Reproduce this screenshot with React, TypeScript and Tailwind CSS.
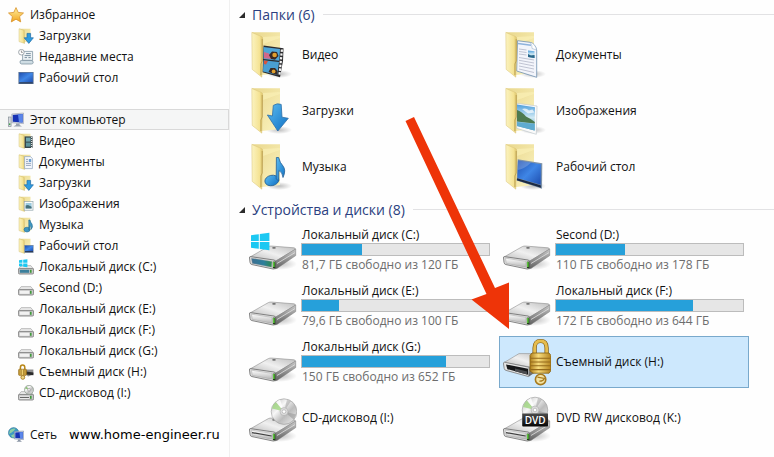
import { ReactNode } from 'react'

type Badge = 'video' | 'documents' | 'downloads' | 'pictures' | 'music' | 'desktop'
type DriveKind = 'system' | 'plain' | 'cd' | 'dvd' | 'locked'

type TreeEntry = { label: string; icon: ReactNode }
type Folder = { label: string; badge: Badge }
type Drive = { label: string; kind: DriveKind; used?: number; info?: string }

// gradients shared by all the icons on the page
function IconDefs() {
  return (
    <svg className="absolute size-0" aria-hidden="true">
      <defs>
        <linearGradient id="folderFront" x1="0" y1="0" x2="1" y2="0">
          <stop offset="0" stopColor="#fbf3c0" />
          <stop offset="0.7" stopColor="#f5e394" />
          <stop offset="1" stopColor="#dcc36a" />
        </linearGradient>
        <linearGradient id="folderBack" x1="0" y1="0" x2="1" y2="1">
          <stop offset="0" stopColor="#e9d78c" />
          <stop offset="1" stopColor="#fbf3c0" />
        </linearGradient>
        <linearGradient id="blue" x1="0" y1="0" x2="1" y2="1">
          <stop offset="0" stopColor="#5cbcf0" />
          <stop offset="1" stopColor="#0f70c4" />
        </linearGradient>
        <linearGradient id="screen" x1="0" y1="0" x2="1" y2="1">
          <stop offset="0" stopColor="#1f4fb0" />
          <stop offset="0.5" stopColor="#3f86e6" />
          <stop offset="1" stopColor="#1d4cae" />
        </linearGradient>
        <linearGradient id="photo" x1="0" y1="0" x2="0" y2="1">
          <stop offset="0" stopColor="#4f9fdc" />
          <stop offset="0.5" stopColor="#cfe9f4" />
          <stop offset="1" stopColor="#3f8fb4" />
        </linearGradient>
        <linearGradient id="driveTop" x1="0" y1="1" x2="1" y2="0">
          <stop offset="0" stopColor="#b9b9b9" />
          <stop offset="0.5" stopColor="#f0f0f0" />
          <stop offset="1" stopColor="#bdbdbd" />
        </linearGradient>
        <linearGradient id="driveFront" x1="0" y1="0" x2="0" y2="1">
          <stop offset="0" stopColor="#ffffff" />
          <stop offset="1" stopColor="#b4b4b4" />
        </linearGradient>
        <linearGradient id="driveSide" x1="0" y1="0" x2="0" y2="1">
          <stop offset="0" stopColor="#c9c9c9" />
          <stop offset="1" stopColor="#5e5e5e" />
        </linearGradient>
        <linearGradient id="driveSystem" x1="0" y1="0" x2="1" y2="0">
          <stop offset="0" stopColor="#3c6f91" />
          <stop offset="0.6" stopColor="#2d7f9c" />
          <stop offset="1" stopColor="#2f8a4c" />
        </linearGradient>
        <linearGradient id="disc" x1="0" y1="0" x2="1" y2="1">
          <stop offset="0" stopColor="#b5b5b5" />
          <stop offset="0.35" stopColor="#f7f7f7" />
          <stop offset="0.6" stopColor="#bcbcbc" />
          <stop offset="1" stopColor="#f0f0f0" />
        </linearGradient>
        <linearGradient id="label" x1="0" y1="0" x2="0" y2="1">
          <stop offset="0" stopColor="#4a4a4a" />
          <stop offset="1" stopColor="#050505" />
        </linearGradient>
        <linearGradient id="gold" x1="0" y1="0" x2="1" y2="0">
          <stop offset="0" stopColor="#b07f1c" />
          <stop offset="0.4" stopColor="#f7dc7c" />
          <stop offset="1" stopColor="#b5841f" />
        </linearGradient>
        <linearGradient id="star" x1="0" y1="0" x2="0" y2="1">
          <stop offset="0" stopColor="#fff0a0" />
          <stop offset="1" stopColor="#f2a51e" />
        </linearGradient>
        <radialGradient id="shadow">
          <stop offset="0" stopColor="#000000" stopOpacity="0.25" />
          <stop offset="1" stopColor="#000000" stopOpacity="0" />
        </radialGradient>
      </defs>
    </svg>
  )
}

function FolderBadge({ badge }: { badge: Badge }) {
  switch (badge) {
    case 'video':
      return (
        <g>
          <path d="M14.5 14.5 34.5 17.3 34 30 31 46.3 13.5 41.3Z" fill="#2b2b2e" />
          <path d="M14.5 16 31 18 30.3 29.8 14.5 28Z" fill="#4fa6d8" />
          <path d="M14.5 29.2 30 31 28.3 44 14 40.4Z" fill="#4a9fd2" />
          <path d="M15 21 20 22.5 23 28 15 27.2Z" fill="#d2688a" />
          <path d="M20 24 23 20.5 28 21 29.5 25 26 28.8 22 28Z" fill="#3a2a24" />
          <circle cx="25.6" cy="24" r="2.3" fill="#e0a02e" />
          <path d="M15 29.6 19 30 17 33.5 15 33Z" fill="#d9543c" />
          <path d="M19.5 41 21.5 37 26 37 28.6 40 28.3 44Z" fill="#3a2a24" />
          <circle cx="24.6" cy="40.4" r="1.9" fill="#e0a02e" />
          <path d="M32.9 18.5 30.4 45" stroke="#f4f4f4" strokeWidth="2.2" strokeDasharray="2.4 1.4" fill="none" />
        </g>
      )
    case 'documents':
      return (
        <g>
          <path d="M14.5 9.7 27 11.3Q32 12.4 33.7 19V46.3L13.7 40Z" fill="#f3f5fb" stroke="#6f8fb0" strokeWidth="0.8" />
          <path d="M15 12.5 28 14.2" stroke="#8fb3dc" strokeWidth="1.6" />
          <path d="M16 18 23.5 19M16 20.5 23.5 21.5M16 23 23.5 24M16 26.5 31 29M16 29.3 31 32M16 32 31 35M16 35 31 38M16 38 31 41.5" stroke="#a9adc0" strokeWidth="0.7" />
          <path d="M25 19.5 31.5 20.3V27L25 26Z" fill="url(#photo)" />
          <path d="M25 23 28 24.5 31.5 24V27L25 26Z" fill="#2b6688" />
          <path d="M27 11.3Q29.5 14 29 17.5L33.7 19Q32 12.4 27 11.3Z" fill="#ffffff" stroke="#8aa6c4" strokeWidth="0.5" />
        </g>
      )
    case 'downloads':
      return (
        <path
          d="M24.3 18.4Q28 15.8 32.2 17.4L33 30.2 39.3 31.3 28.8 44 18.4 28 23.4 29Z"
          fill="url(#blue)"
          stroke="#2c6ea8"
          strokeWidth="0.8"
          strokeLinejoin="round"
        />
      )
    case 'pictures':
      return (
        <g>
          <path d="M13.7 16.3 34 19 33.3 47.3 13.7 41.3Z" fill="#fafafa" stroke="#b9c2c8" strokeWidth="0.6" />
          <path d="M14 17.6 32 20.2 31.6 43.5 14 39Z" fill="url(#photo)" />
          <path d="M19 22Q23 20.4 26 23.4L29.4 22.4 31.4 25.4 25 26.6Z" fill="#ffffff" opacity="0.7" />
          <path d="M14 23Q19 24.6 23 29.6 27 31.4 31.8 35V36.6L14 34.5Z" fill="#4d7a50" />
          <path d="M14 35 31.8 37 31.6 43.5 14 39Z" fill="#5fabd0" />
        </g>
      )
    case 'music':
      return (
        <g fill="url(#blue)" stroke="#235f96" strokeWidth="0.8" strokeLinejoin="round">
          <ellipse cx="22.8" cy="37.5" rx="7" ry="5.2" transform="rotate(-12 22.8 37.5)" />
          <path d="M27.4 14.5 29.6 14.5Q31 20 34 23 37.4 27 34 34.5 33.6 29 29.8 27.5V38L27.2 36Z" />
        </g>
      )
    case 'desktop':
      return (
        <g>
          <path d="M14.7 16.3 39.3 20.3 39 45.7 13.7 37.5Z" fill="#7e93aa" />
          <path d="M15 17.6 37.9 21.3 37.7 41.8 14.5 35Z" fill="url(#screen)" />
          <path d="M15 17.6 28 19.7Q21 26 14.8 27Z" fill="#ffffff" opacity="0.2" />
          <path d="M14.2 35.2 37.7 42.2 38 44.8 13.7 37.2Z" fill="#1c2a44" />
        </g>
      )
  }
}

function FolderIcon({ badge }: { badge: Badge }) {
  return (
    <svg viewBox="0 0 48 48" className="size-12 shrink-0" aria-hidden="true">
      <ellipse cx="30" cy="43" rx="13" ry="4" fill="url(#shadow)" />
      <path d="M3 1.3H31V42L13 44Z" fill="url(#folderBack)" />
      <path d="M13.5 6 31 5V7L14 13Z" fill="#f9efb5" opacity="0.7" />
      <FolderBadge badge={badge} />
      <path
        d="M2.8 1.4 12.6 5.6Q13.8 6.2 13.7 8L12.8 46.2 3.2 38.4Z"
        fill="url(#folderFront)"
        stroke="#d8c277"
        strokeWidth="0.5"
      />
      <path d="M13.2 8V30L11.9 33V44" stroke="#b3974a" strokeWidth="0.8" fill="none" />
    </svg>
  )
}

function DriveBody({ kind }: { kind: DriveKind }) {
  const front = kind === 'system' ? 'url(#driveSystem)' : 'url(#driveFront)'
  return (
    <g strokeLinejoin="round">
      <ellipse cx="30" cy="38" rx="18" ry="6" fill="url(#shadow)" />
      <path d="M1 31 19.5 20.5Q20.8 19.9 23 20.1L45 21.8Q47 22.2 46 23.6L27 35Z" fill="url(#driveTop)" stroke="#8e8e8e" strokeWidth="0.6" />
      <path d="M26.8 35 46.7 23V29.6L28 42.4 25.4 43Z" fill="url(#driveSide)" stroke="#7a7a7a" strokeWidth="0.5" />
      <path d="M28 37.5 46 26.6" stroke="#e2e2e2" strokeWidth="0.8" />
      <path d="M1.4 30.6 25 34Q27 34.4 26.7 36.5L26 42Q25.6 43.4 24 43L3 38.6Q1.2 38.2 1 36.4L0.5 32Q0.3 30.6 1.4 30.6Z" fill="#dedede" stroke="#6c6c6c" strokeWidth="0.8" />
      <path d="M2.4 32.2 23 35.4 22.6 41.2 3.3 37.4Z" fill={front} stroke="#9a9a9a" strokeWidth="0.4" />
      {(kind === 'cd' || kind === 'dvd') && <path d="M3 34.6 22.6 38" stroke="#3d3d3d" strokeWidth="1.2" />}
      <rect x="23.8" y="35.6" width="2.6" height="6.6" fill="#233d1c" />
      <rect x="24" y="36" width="1.6" height="5" fill="#5ac23a" />
      <ellipse cx="25" cy="21.9" rx="1.9" ry="0.8" fill="#6d6d6d" />
    </g>
  )
}

function Disc({ cx, cy }: { cx: number; cy: number }) {
  return (
    <g transform={`translate(${cx} ${cy})`}>
      <circle r="12.8" fill="url(#disc)" stroke="#9b9b9b" strokeWidth="0.6" />
      <path d="M0 0-12-3Q-11-7.5-8-9.6Z" fill="#9fd67f" opacity="0.8" />
      <path d="M0 0-8-9.6-4-12Z" fill="#ffffff" opacity="0.8" />
      <path d="M0 0 12 3 9.6 8Z" fill="#8f8f8f" opacity="0.5" />
      <path d="M0 0 3-12.2 7-10.5Z" fill="#8d8d8d" opacity="0.4" />
      <circle r="4" fill="#dcdcdc" stroke="#a5a5a5" strokeWidth="0.5" />
      <circle r="1.8" fill="#ffffff" stroke="#999999" strokeWidth="0.5" />
    </g>
  )
}

function DriveIcon({ kind }: { kind: DriveKind }) {
  if (kind === 'locked') {
    return (
      <svg viewBox="0 0 48 48" className="size-12 shrink-0" aria-hidden="true">
        <path d="M1 24.6 16 15.6H40L27 29Z" fill="url(#driveTop)" stroke="#8e8e8e" strokeWidth="0.6" />
        <path d="M26 29 40 20V29L26 38.6Z" fill="url(#driveSide)" />
        <path d="M1.4 24.2 26 29.2 25.6 38.6 3 32.4Q1.4 32 1.2 30.4L0.5 26Q0.3 24.2 1.4 24.2Z" fill="#e4e4e4" stroke="#777777" strokeWidth="0.8" />
        <path d="M3 26.4 25 30.8V36.8L4.4 31.2Z" fill="#17181a" />
        <path d="M12 30.6 24 33.4V36.4L12 33.2Z" fill="#4b4d50" />
        <path d="M31.6 17V10Q31.6 3 37.6 3T43.6 10V17" fill="none" stroke="#7d5810" strokeWidth="4.2" />
        <path d="M31.6 17V10Q31.6 3 37.6 3T43.6 10V17" fill="none" stroke="#e6bd4e" strokeWidth="2.8" />
        <path d="M27 17.4 29 15H46L48 17.4V32.6L46 35.2H30L27 33Z" fill="url(#gold)" stroke="#83600f" strokeWidth="0.8" />
        <path d="M27.4 20.3H47.6M27.4 24H47.6M27.4 27.8H47.6M27.4 31.6H47.6" stroke="#94691a" strokeWidth="1.1" />
        <circle cx="37.6" cy="41.4" r="5.2" fill="#f3e3a4" stroke="#a77a1c" strokeWidth="1.6" />
        <path d="M34.4 39.2 41.4 40.4Q40 43.4 36.4 43.2" fill="none" stroke="#a77a1c" strokeWidth="1.2" />
      </svg>
    )
  }

  const lowered = kind === 'cd' || kind === 'dvd'
  return (
    <svg viewBox="0 0 48 48" className="size-12 shrink-0" aria-hidden="true">
      <g transform={lowered ? 'translate(0 4)' : undefined}>
        <DriveBody kind={kind} />
      </g>
      {kind === 'system' && (
        <path
          d="M2 9.2 9.8 8.2V15H2ZM10.8 8 20.4 6.7V15H10.8ZM2 16H9.8V22.8L2 21.8ZM10.8 16H20.4V24.2L10.8 23Z"
          fill="#1cc8f2"
        />
      )}
      {kind === 'cd' && <Disc cx={35} cy={17.6} />}
      {kind === 'dvd' && (
        <g>
          <Disc cx={32} cy={16} />
          <path d="M19.2 19.6H45V31.4Q45 32.4 44 32.4H20.2Q19.2 32.4 19.2 31.4Z" fill="url(#label)" />
          <text x="32.1" y="29.6" textAnchor="middle" className="fill-white font-['Open_Sans',sans-serif] text-[10px] font-semibold">
            DVD
          </text>
        </g>
      )}
    </svg>
  )
}

function SmallIcon({ children }: { children: ReactNode }) {
  return (
    <svg viewBox="0 0 16 16" className="size-4 shrink-0" aria-hidden="true">
      {children}
    </svg>
  )
}

function SmallFolder({ badge }: { badge: Badge }) {
  return (
    <SmallIcon>
      <path d="M1 0.8H12.5V14H6Z" fill="url(#folderBack)" />
      <path d="M1 0.8 6.2 2.4 6.6 15.4 1 13.6Z" fill="url(#folderFront)" stroke="#cdb562" strokeWidth="0.4" />
      {badge === 'video' && (
        <g>
          <rect x="6.6" y="3.4" width="8" height="11.6" fill="#38464a" />
          <rect x="8" y="4.6" width="4.6" height="4" fill="#6fa6ae" />
          <rect x="8" y="9.6" width="4.6" height="4" fill="#5d949c" />
          <path d="M13.7 4V15" stroke="#ffffff" strokeDasharray="1 1" />
        </g>
      )}
      {badge === 'documents' && (
        <g>
          <path d="M6.6 2.6H12.6L14.4 4.6V14.6H6.6Z" fill="#f4f7fc" stroke="#8ea2bd" strokeWidth="0.7" />
          <path d="M8 5.4H10M8 7.4H10M8 9.4H13M8 11.4H13" stroke="#8093ae" strokeWidth="0.8" />
          <rect x="10.8" y="5" width="2.4" height="3" fill="#6da0d2" />
        </g>
      )}
      {badge === 'downloads' && (
        <path d="M9 5.4H12.6V9.8H15.4L10.8 15.4 6.2 9.8H9Z" fill="#2f9be0" stroke="#1e6ca8" strokeWidth="0.7" />
      )}
      {badge === 'pictures' && (
        <g>
          <rect x="6.2" y="5.6" width="8.8" height="8.6" fill="#fafcfc" stroke="#93a5ac" strokeWidth="0.7" />
          <rect x="7.6" y="7" width="6" height="5.6" fill="#9ccbe0" />
          <path d="M7.6 9.4 10 9 13.6 10.8V12.6H7.6Z" fill="#44707c" />
        </g>
      )}
      {badge === 'music' && (
        <g fill="#3d97c4" stroke="#24698f" strokeWidth="0.6">
          <ellipse cx="9" cy="12.6" rx="3" ry="2.4" />
          <path d="M10.8 3H12Q12.4 5.4 14 7 15.4 9.6 13.2 12.4 13.6 9.4 12 8.6V13H10.8Z" />
        </g>
      )}
      {badge === 'desktop' && (
        <g>
          <rect x="6.2" y="7" width="9.4" height="7.8" fill="#7c8da3" />
          <rect x="7" y="7.8" width="8" height="5.4" fill="url(#screen)" />
          <rect x="7" y="13.2" width="8" height="1" fill="#1d2b48" />
        </g>
      )}
    </SmallIcon>
  )
}

function SmallDrive({ kind }: { kind: DriveKind }) {
  return (
    <SmallIcon>
      {kind === 'locked' ? (
        <g>
          <path d="M6 8 9 5.4H15.4V10.6L10 12.6Z" fill="#8e8e8e" />
          <path d="M8 7.6 15.4 8.6V11.2L8 10.6Z" fill="#2b2b2b" />
          <path d="M2.4 6V3.4Q2.4 1 4.6 1T6.8 3.4V6" fill="none" stroke="#b98718" strokeWidth="1.5" />
          <rect x="0.6" y="5.2" width="8" height="6.2" rx="0.8" fill="url(#gold)" stroke="#94691a" strokeWidth="0.6" />
          <path d="M3.2 5.4V11.2M5.8 5.4V11.2" stroke="#94691a" strokeWidth="0.8" />
          <circle cx="4.8" cy="13.4" r="1.9" fill="#f0d88a" stroke="#a77a1c" strokeWidth="0.9" />
        </g>
      ) : (
        <g>
          <path d="M3.2 6.6H12.8L15.6 10H0.4Z" fill="#e6e6e6" stroke="#9d9d9d" strokeWidth="0.6" />
          <rect x="0.4" y="9.6" width="15.2" height="5.4" rx="1.2" fill="#c9c9c9" stroke="#777777" strokeWidth="0.8" />
          <rect
            x="1.8"
            y="10.8"
            width="9.4"
            height="3"
            className={kind === 'system' ? 'fill-[#3b7f9c]' : 'fill-[#f2f2f2]'}
          />
          <rect x="12" y="10.8" width="1.6" height="3" fill="#3f9a3a" />
        </g>
      )}
      {kind === 'system' && (
        <path d="M1 1.2 4.4 0.8V3.8H1ZM5.2 0.7 9.4 0.2V3.8H5.2ZM1 4.6H4.4V7.6L1 7.2ZM5.2 4.6H9.4V8.2L5.2 7.7Z" fill="#1cc8f2" />
      )}
      {kind === 'cd' && (
        <g>
          <circle cx="11" cy="4.8" r="4.5" fill="url(#disc)" stroke="#8b9a8b" strokeWidth="0.7" />
          <path d="M11 4.8 7 3.4 8.6 1.4Z" fill="#8fc47a" />
          <circle cx="11" cy="4.8" r="1.3" fill="#ffffff" stroke="#8a8a8a" strokeWidth="0.6" />
          <path d="M2 12.4H11" stroke="#444444" strokeWidth="0.9" />
        </g>
      )}
    </SmallIcon>
  )
}

function StarIcon() {
  return (
    <SmallIcon>
      <path
        d="M8 0.6 10.2 5.4 15.5 6 11.6 9.6 12.7 14.9 8 12.2 3.3 14.9 4.4 9.6 0.5 6 5.8 5.4Z"
        fill="url(#star)"
        stroke="#d8922a"
        strokeWidth="0.8"
        strokeLinejoin="round"
      />
    </SmallIcon>
  )
}

function RecentIcon() {
  return (
    <SmallIcon>
      <path d="M4.6 2.4H14.6V11.4H4.6Z" fill="#eef3f6" stroke="#8297a3" strokeWidth="0.8" />
      <path d="M3 11.4H13.2Q15.4 11.6 15.2 13.6 15 15 13.4 15H3.6Q2 14.8 2 13.2T3 11.4Z" fill="#cfdde4" stroke="#72899a" strokeWidth="0.7" />
      <path d="M8 4.6H12.8M6.6 6.6H12.8M6.6 8.6H9M10.4 8.6H12.8" stroke="#6f8796" strokeWidth="0.9" />
      <circle cx="3.4" cy="3.2" r="2.8" fill="#ffffff" stroke="#8a9399" strokeWidth="0.8" />
      <path d="M3.4 1.6V3.4H4.8" fill="none" stroke="#555555" strokeWidth="0.6" />
    </SmallIcon>
  )
}

function DesktopIcon() {
  return (
    <SmallIcon>
      <rect x="0.4" y="2" width="15.2" height="12" fill="#5d7596" />
      <rect x="1.2" y="2.8" width="13.6" height="9.6" fill="url(#screen)" />
      <rect x="1.2" y="12.4" width="13.6" height="1" fill="#22304c" />
    </SmallIcon>
  )
}

function ComputerIcon() {
  return (
    <SmallIcon>
      <rect x="0.3" y="5" width="2.8" height="9.6" fill="#d6dade" stroke="#7d878f" strokeWidth="0.6" />
      <rect x="1.1" y="11.4" width="1.2" height="1.6" fill="#2c9a3a" />
      <path d="M3.8 2 15.6 1V11.6L3.8 10.8Z" fill="#cfd5e0" stroke="#8c94a6" strokeWidth="0.5" />
      <path d="M4.8 2.9 14.6 2.1V10.4L4.8 9.8Z" fill="#1632b4" />
      <path d="M10 2.5 14.6 2.1V10.4L11 10.2Z" fill="#5a86ea" />
      <path d="M8 11.4H11.6V13L14 14.4H5.4L8 13Z" fill="#9aa3b0" />
    </SmallIcon>
  )
}

function NetworkIcon() {
  return (
    <SmallIcon>
      <circle cx="5.6" cy="5.8" r="5.2" fill="#3d9ac4" stroke="#286c8e" strokeWidth="0.5" />
      <path d="M2 3Q5 0.8 7.6 1.8 6 4 3.6 5.6T1 7Z" fill="#8ed0a4" />
      <path d="M3 8.4 6 7 6.6 10.4 4.4 10.6Z" fill="#8ed0a4" />
      <path d="M6.4 4.6 15.6 4V12.6L6.4 12Z" fill="#c9d3e4" stroke="#707f9c" strokeWidth="0.5" />
      <path d="M7.3 5.5 14.8 5V11.6L7.3 11.1Z" fill="#1632b4" />
      <path d="M11.4 5.2 14.8 5V11.6L12.2 11.4Z" fill="#5a86ea" />
      <path d="M10 12.4H12.4V13.6L14 14.8H8.4L10 13.6Z" fill="#8c97a6" />
    </SmallIcon>
  )
}

const favorites: TreeEntry[] = [
  { label: 'Загрузки', icon: <SmallFolder badge="downloads" /> },
  { label: 'Недавние места', icon: <RecentIcon /> },
  { label: 'Рабочий стол', icon: <DesktopIcon /> },
]

const computer: TreeEntry[] = [
  { label: 'Видео', icon: <SmallFolder badge="video" /> },
  { label: 'Документы', icon: <SmallFolder badge="documents" /> },
  { label: 'Загрузки', icon: <SmallFolder badge="downloads" /> },
  { label: 'Изображения', icon: <SmallFolder badge="pictures" /> },
  { label: 'Музыка', icon: <SmallFolder badge="music" /> },
  { label: 'Рабочий стол', icon: <SmallFolder badge="desktop" /> },
  { label: 'Локальный диск (C:)', icon: <SmallDrive kind="system" /> },
  { label: 'Second (D:)', icon: <SmallDrive kind="plain" /> },
  { label: 'Локальный диск (E:)', icon: <SmallDrive kind="plain" /> },
  { label: 'Локальный диск (F:)', icon: <SmallDrive kind="plain" /> },
  { label: 'Локальный диск (G:)', icon: <SmallDrive kind="plain" /> },
  { label: 'Съемный диск (H:)', icon: <SmallDrive kind="locked" /> },
  { label: 'CD-дисковод (I:)', icon: <SmallDrive kind="cd" /> },
]

const folders: Folder[] = [
  { label: 'Видео', badge: 'video' },
  { label: 'Документы', badge: 'documents' },
  { label: 'Загрузки', badge: 'downloads' },
  { label: 'Изображения', badge: 'pictures' },
  { label: 'Музыка', badge: 'music' },
  { label: 'Рабочий стол', badge: 'desktop' },
]

const drives: Drive[] = [
  { label: 'Локальный диск (C:)', kind: 'system', used: 32, info: '81,7 ГБ свободно из 120 ГБ' },
  { label: 'Second (D:)', kind: 'plain', used: 37, info: '110 ГБ свободно из 178 ГБ' },
  { label: 'Локальный диск (E:)', kind: 'plain', used: 20, info: '79,6 ГБ свободно из 100 ГБ' },
  { label: 'Локальный диск (F:)', kind: 'plain', used: 73, info: '172 ГБ свободно из 644 ГБ' },
  { label: 'Локальный диск (G:)', kind: 'plain', used: 77, info: '150 ГБ свободно из 652 ГБ' },
  { label: 'Съемный диск (H:)', kind: 'locked' },
  { label: 'CD-дисковод (I:)', kind: 'cd' },
  { label: 'DVD RW дисковод (K:)', kind: 'dvd' },
]

function TreeGroup({ root, items, selected }: { root: TreeEntry; items: TreeEntry[]; selected?: boolean }) {
  return (
    <div>
      <a
        href="#"
        className={
          selected
            ? 'flex h-[21px] items-center gap-1.5 border border-l-0 border-[#d9d9d9] bg-[#f5f6f6] pl-2'
            : 'flex h-[21px] items-center gap-1.5 pl-2'
        }
      >
        {root.icon}
        {root.label}
      </a>
      <ul>
        {items.map((item) => (
          <li key={item.label}>
            <a href="#" className="flex h-[21px] items-center gap-[5px] pl-[18px]">
              {item.icon}
              {item.label}
            </a>
          </li>
        ))}
      </ul>
    </div>
  )
}

function Section({ title, children }: { title: string; children: ReactNode }) {
  return (
    <section>
      <h2 className="flex h-[29px] items-center pl-[9px]">
        <button type="button" className="flex items-center gap-[7px] text-sm leading-5 text-[#2b3f80]">
          <svg viewBox="0 0 6 6" className="size-1.5" aria-hidden="true">
            <path d="M6 0V6H0Z" fill="#2b2b2b" />
          </svg>
          {title}
        </button>
        <span className="ml-2 h-px flex-1 bg-[#e2e2e4]" />
      </h2>
      <div className="grid grid-cols-2 gap-1 pr-[25px] pl-[15px]">{children}</div>
    </section>
  )
}

function Tile({ icon, selected, children }: { icon: ReactNode; selected?: boolean; children: ReactNode }) {
  return (
    <a
      href="#"
      className={
        selected
          ? 'flex h-[52px] items-center gap-1 border border-[#79a9cc] bg-[#cde8fd] pr-1 pl-[3px]'
          : 'flex h-[52px] items-center gap-1 border border-transparent pr-1 pl-[3px]'
      }
    >
      {icon}
      <div className="min-w-0 flex-1">{children}</div>
    </a>
  )
}

function DriveTile({ drive }: { drive: Drive }) {
  return (
    <Tile icon={<DriveIcon kind={drive.kind} />} selected={drive.kind === 'locked'}>
      <p className="pl-px">{drive.label}</p>
      {drive.used !== undefined && (
        <>
          <div
            role="meter"
            aria-label={drive.label}
            aria-valuenow={drive.used}
            className="h-[13px] border border-[#bcbcbc] bg-[#e6e6e6]"
          >
            <div className="h-full bg-[#26a0da]" style={{ width: `${drive.used}%` }} />
          </div>
          <p className="pt-px pl-px text-[#6d6d6d]">{drive.info}</p>
        </>
      )}
    </Tile>
  )
}

export default function App() {
  return (
    <div className="relative flex min-h-screen bg-[#fefefe] font-['Open_Sans','Noto_Sans',sans-serif] text-xs leading-4 text-[#111111]">
      <IconDefs />

      <nav className="flex w-[230px] shrink-0 flex-col gap-[21px] border-r border-[#f0f0f0] pt-1">
        <TreeGroup root={{ label: 'Избранное', icon: <StarIcon /> }} items={favorites} />
        <TreeGroup root={{ label: 'Этот компьютер', icon: <ComputerIcon /> }} items={computer} selected />
        <div className="flex h-[21px] items-center gap-3 pl-2">
          <a href="#" className="flex items-center gap-1.5">
            <NetworkIcon />
            Сеть
          </a>
          <span className="font-['DejaVu_Sans',sans-serif] text-[13px] text-black">www.home-engineer.ru</span>
        </div>
      </nav>

      <main className="flex min-w-0 flex-1 flex-col gap-0.5">
        <Section title="Папки (6)">
          {folders.map((folder) => (
            <Tile key={folder.label} icon={<FolderIcon badge={folder.badge} />}>
              <p className="pl-px">{folder.label}</p>
            </Tile>
          ))}
        </Section>
        <Section title="Устройства и диски (8)">
          {drives.map((drive) => (
            <DriveTile key={drive.label} drive={drive} />
          ))}
        </Section>
      </main>

      {/* pointer to the removable drive */}
      <svg viewBox="0 0 106 214" className="pointer-events-none absolute top-[116px] left-[404px] h-[214px] w-[106px]" aria-hidden="true">
        <path d="M1.5 5 10 1 91 172 105 166.5V213L67.5 183.5 82.5 178Z" fill="#ee3408" />
      </svg>
    </div>
  )
}
